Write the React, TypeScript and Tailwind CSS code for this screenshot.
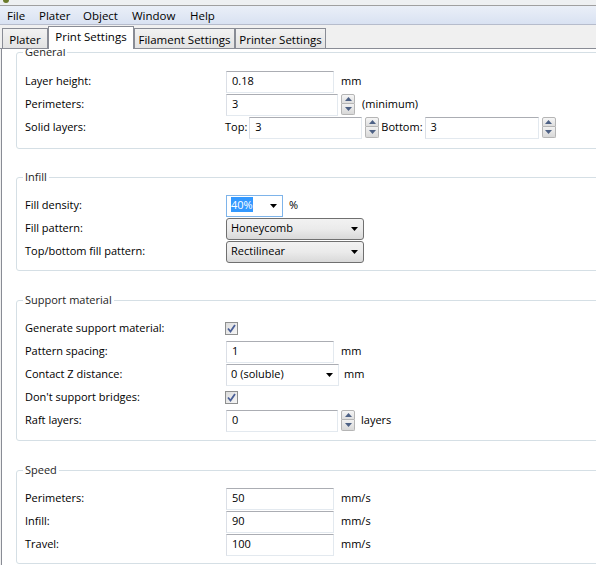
import React from 'react';

const font = { fontFamily: '"Open Sans", "Noto Sans", sans-serif' };

function TextBox({ value, w }: { value: string; w: string }) {
  return (
    <div
      className={`${w} h-[22px] flex items-center px-[5px] bg-white border border-[#e3e9ef] border-t-[#abadb3] border-l-[#dbdfe6] text-black`}
    >
      {value}
    </div>
  );
}

function Arrow({ dir }: { dir: 'up' | 'down' }) {
  return (
    <svg width="7" height="4" viewBox="0 0 7 4">
      {dir === 'up' ? <path d="M0 4 L3.5 0 L7 4 Z" fill="#4d6185" /> : <path d="M0 0 L3.5 4 L7 0 Z" fill="#4d6185" />}
    </svg>
  );
}

function Spin() {
  return (
    <div className="flex flex-col gap-0 w-[14px] h-[21px] ml-[3px]">
      <div className="h-[10px] flex items-center justify-center border border-[#b5b5b5] rounded-t-[2px] bg-gradient-to-b from-[#f6f6f6] to-[#dedede]">
        <Arrow dir="up" />
      </div>
      <div className="h-[11px] flex items-center justify-center border border-t-0 border-[#b5b5b5] rounded-b-[2px] bg-gradient-to-b from-[#f2f2f2] to-[#d8d8d8]">
        <Arrow dir="down" />
      </div>
    </div>
  );
}

function Check() {
  return (
    <div className="w-[13px] h-[13px] border border-[#8e8f8f] bg-gradient-to-br from-[#dcdcdc] to-[#f6f6f6] flex items-center justify-center ml-[-1px]">
      <svg width="9" height="9" viewBox="0 0 9 9">
        <path d="M1 4.5 L3.5 7.5 L8 1" stroke="#4a5f97" strokeWidth="1.8" fill="none" />
      </svg>
    </div>
  );
}

function Caret() {
  return (
    <svg width="7" height="4" viewBox="0 0 7 4">
      <path d="M0 0 L7 0 L3.5 4 Z" fill="#000" />
    </svg>
  );
}

function Combo({ value, w, focused, selected }: { value: string; w: string; focused?: boolean; selected?: boolean }) {
  return (
    <div
      className={`${w} h-[22px] flex items-center bg-white border ${
        focused ? 'border-[#7eb4ea]' : 'border-[#e3e9ef] border-t-[#abadb3] border-l-[#dbdfe6]'
      }`}
    >
      <div className="flex-1 px-[4px]">
        {selected ? <span className="bg-[#3399ff] text-white">{value}</span> : value}
      </div>
      <div className="w-[17px] flex items-center justify-center">
        <Caret />
      </div>
    </div>
  );
}

function Select({ value }: { value: string }) {
  return (
    <div className="w-[138px] h-[22px] flex items-center border border-[#707070] rounded-[3px] bg-gradient-to-b from-[#f2f2f2] via-[#ebebeb] to-[#d9d9d9]">
      <div className="flex-1 px-[4px]">{value}</div>
      <div className="w-[17px] flex items-center justify-center">
        <Caret />
      </div>
    </div>
  );
}

function Row({ label, children }: { label: string; children?: React.ReactNode }) {
  return (
    <div className="flex items-center h-[23px]">
      <div className="w-[201px] shrink-0">{label}</div>
      <div className="flex items-center">{children}</div>
    </div>
  );
}

function Group({ title, className, children }: { title: string; className: string; children: React.ReactNode }) {
  return (
    <div className={`relative ml-[14px] w-[620px] border border-[#d5dfe5] rounded-[3px] pl-[8px] ${className}`}>
      <span className="absolute left-[6px] top-[-9px] px-[2px] bg-white leading-[16px] text-[#1e1e1e]">{title}</span>
      {children}
    </div>
  );
}

const tabIdle =
  'h-[20px] pt-[2px] flex items-center justify-center border border-b-0 border-[#898c95] bg-gradient-to-b from-[#f2f2f2] to-[#e3e3e3]';

export default function App() {
  return (
    <div className="w-[596px] h-[565px] overflow-hidden bg-[#f0f0f0] text-[11px] text-black flex flex-col" style={font}>
      {/* title bar remnant */}
      <div className="h-[5px] bg-[#eef0f2] relative shrink-0">
        <div className="absolute left-[3px] top-0 w-[6px] h-[3px] rounded-b-full bg-[#6b7a2a]" />
      </div>
      {/* menu bar */}
      <div className="h-[20px] shrink-0 flex items-center pt-[2px] border-t border-[#a0a0a0] border-b border-b-[#b6bccc] bg-gradient-to-b from-[#eaeff8] to-[#d9e2f2] pl-[7px] text-[11.5px]">
        <span className="w-[32px]">File</span>
        <span className="w-[44px]">Plater</span>
        <span className="w-[49px]">Object</span>
        <span className="w-[58px]">Window</span>
        <span>Help</span>
      </div>
      {/* tabs */}
      <div className="h-[24px] shrink-0 flex items-end pl-[2px] border-b border-[#898c95] relative z-10 text-[11.5px]">
        <div className={`${tabIdle} w-[46px]`}>Plater</div>
        <div className="w-[86px] h-[23px] mb-[-1px] flex justify-center items-start pt-[1px] border border-b-0 border-[#898c95] bg-white">
          Print Settings
        </div>
        <div className={`${tabIdle} w-[101px]`}>Filament Settings</div>
        <div className={`${tabIdle} w-[91px]`}>Printer Settings</div>
      </div>
      {/* content */}
      <div className="flex-1 ml-[1px] border-l border-[#898c95] bg-white overflow-hidden pt-[3px]">
        <Group title="General" className="pt-[17px] pb-[9px]">
          <Row label="Layer height:">
            <TextBox value="0.18" w="w-[108px]" />
            <span className="ml-[7px]">mm</span>
          </Row>
          <Row label="Perimeters:">
            <TextBox value="3" w="w-[112px]" />
            <Spin />
            <span className="ml-[7px]">(minimum)</span>
          </Row>
          <Row label="Solid layers:">
            <span className="ml-[-1px] mr-[2px]">Top:</span>
            <TextBox value="3" w="w-[113px]" />
            <Spin />
            <span className="ml-[2px] mr-[2px]">Bottom:</span>
            <TextBox value="3" w="w-[114px]" />
            <Spin />
          </Row>
        </Group>

        <Group title="Infill" className="mt-[28px] pt-[16px] pb-[7px]">
          <Row label="Fill density:">
            <Combo value="40%" w="w-[57px]" focused selected />
            <span className="ml-[6px]">%</span>
          </Row>
          <Row label="Fill pattern:">
            <Select value="Honeycomb" />
          </Row>
          <Row label="Top/bottom fill pattern:">
            <Select value="Rectilinear" />
          </Row>
        </Group>

        <Group title="Support material" className="mt-[29px] pt-[16px] pb-[8px]">
          <Row label="Generate support material:">
            <Check />
          </Row>
          <Row label="Pattern spacing:">
            <TextBox value="1" w="w-[108px]" />
            <span className="ml-[7px]">mm</span>
          </Row>
          <Row label="Contact Z distance:">
            <Combo value="0 (soluble)" w="w-[113px]" />
            <span className="ml-[5px]">mm</span>
          </Row>
          <Row label="Don't support bridges:">
            <Check />
          </Row>
          <Row label="Raft layers:">
            <TextBox value="0" w="w-[112px]" />
            <Spin />
            <span className="ml-[6px]">layers</span>
          </Row>
        </Group>

        <Group title="Speed" className="mt-[29px] pt-[16px] pb-[7px]">
          <Row label="Perimeters:">
            <TextBox value="50" w="w-[108px]" />
            <span className="ml-[7px]">mm/s</span>
          </Row>
          <Row label="Infill:">
            <TextBox value="90" w="w-[108px]" />
            <span className="ml-[7px]">mm/s</span>
          </Row>
          <Row label="Travel:">
            <TextBox value="100" w="w-[108px]" />
            <span className="ml-[7px]">mm/s</span>
          </Row>
        </Group>
      </div>
    </div>
  );
}
